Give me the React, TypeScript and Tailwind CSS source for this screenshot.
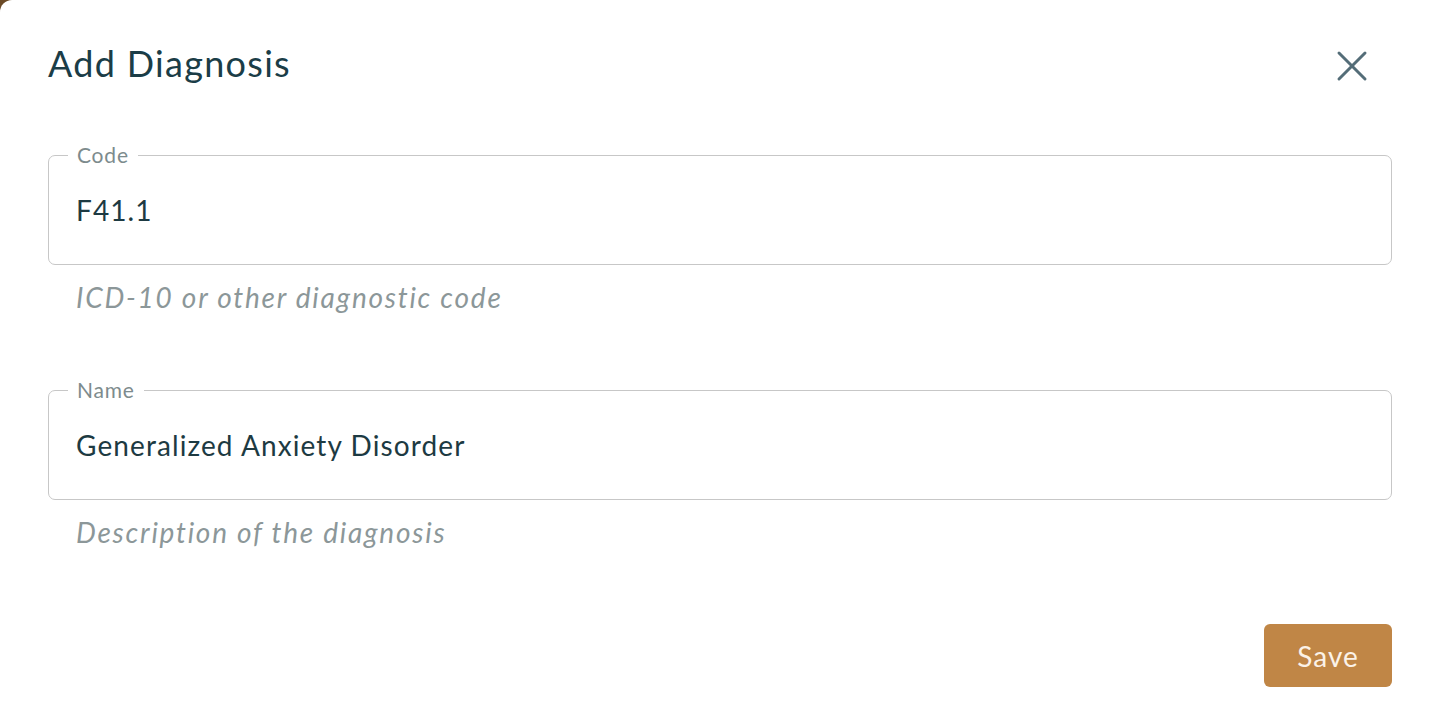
import React from "react";

// One outlined text field with its notched label and helper line
function OutlinedField({
  label,
  value,
  helper,
}: {
  label: string;
  value: string;
  helper: string;
}) {
  return (
    <div>
      <fieldset className="m-0 rounded-[7px] border border-[#c7c7c7] p-0">
        <legend className="ml-[19px] px-[9px] text-[21px] leading-[20px] tracking-[0.8px] text-[#7d8b8d]">
          {label}
        </legend>
        <div className="h-[99px] pl-[27px] pt-[28px] text-[28px] leading-[34px] tracking-[1.1px] text-[#1d3a42]">
          {value}
        </div>
      </fieldset>
      <p className="mt-[15px] pl-[28px] text-[28px] italic leading-[34px] tracking-[1.75px] text-[#8c9799]">
        {helper}
      </p>
    </div>
  );
}

export default function App() {
  return (
    <div className="min-h-screen bg-[#6b4a26]" style={{ fontFamily: "Lato, 'Open Sans', sans-serif" }}>
      <div className="h-[726px] rounded-tl-[12px] bg-white pl-[48px] pr-[44px] pt-[43px]">
        <div className="flex items-center justify-between">
          <h1 className="h-[40px] text-[36px] font-normal leading-[40px] tracking-[1.3px] text-[#1b3d47]">
            Add Diagnosis
          </h1>
          <svg
            className="mr-[24px] mt-[6px] h-[32px] w-[32px]"
            viewBox="0 0 32 32"
            fill="none"
            stroke="#546d78"
            strokeWidth="3"
            strokeLinecap="round"
          >
            <line x1="3" y1="3" x2="29" y2="29" />
            <line x1="29" y1="3" x2="3" y2="29" />
          </svg>
        </div>

        <div className="mt-[62px]">
          <OutlinedField label="Code" value="F41.1" helper="ICD-10 or other diagnostic code" />
        </div>

        <div className="mt-[66px]">
          <OutlinedField
            label="Name"
            value="Generalized Anxiety Disorder"
            helper="Description of the diagnosis"
          />
        </div>

        <div className="mt-[75px] flex justify-end">
          <button className="h-[63px] w-[128px] rounded-[6px] bg-[#c08646] text-[28px] tracking-[1px] text-[#fbf2e8]">
            Save
          </button>
        </div>
      </div>
    </div>
  );
}
